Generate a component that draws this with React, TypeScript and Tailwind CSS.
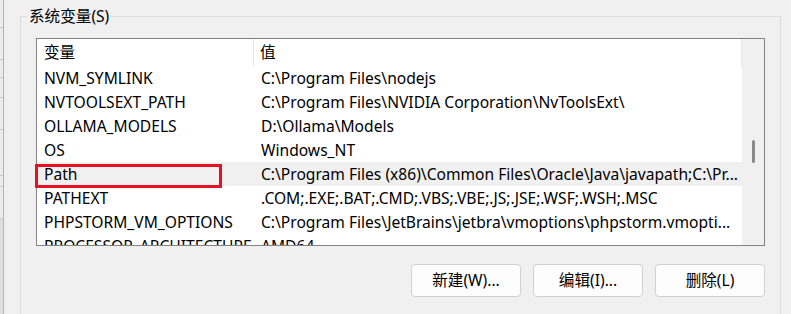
import React from 'react'

const rows = [
  { name: 'NVM_SYMLINK', value: 'C:\\Program Files\\nodejs' },
  { name: 'NVTOOLSEXT_PATH', value: 'C:\\Program Files\\NVIDIA Corporation\\NvToolsExt\\' },
  { name: 'OLLAMA_MODELS', value: 'D:\\Ollama\\Models' },
  { name: 'OS', value: 'Windows_NT' },
  { name: 'Path', value: 'C:\\Program Files (x86)\\Common Files\\Oracle\\Java\\javapath;C:\\Pr...', selected: true },
  { name: 'PATHEXT', value: '.COM;.EXE;.BAT;.CMD;.VBS;.VBE;.JS;.JSE;.WSF;.WSH;.MSC' },
  { name: 'PHPSTORM_VM_OPTIONS', value: 'C:\\Program Files\\JetBrains\\jetbra\\vmoptions\\phpstorm.vmopti...' },
  { name: 'PROCESSOR_ARCHITECTURE', value: 'AMD64' },
]

const buttons = ['新建(W)...', '编辑(I)...', '删除(L)']

export default function App() {
  return (
    <div
      className="relative flex w-[791px] h-[314px] overflow-hidden bg-[#f0f0f0] text-black text-[15.6px]"
      style={{ fontFamily: '"Noto Sans", "Noto Sans CJK SC", sans-serif' }}
    >
      {/* window behind, peeking in on the left */}
      <div className="flex flex-col w-[4px] border-r border-[#b4b4b4] bg-[#ececec]">
        <div className="h-[28px] border-b border-[#c8c8c8]"></div>
        <div className="h-[32px] border-b border-[#c8c8c8]"></div>
        <div className="h-[18px] border-b border-[#c8c8c8]"></div>
        <div className="h-[20px] border-b border-[#c8c8c8]"></div>
        <div className="h-[32px] border-b border-[#c8c8c8]"></div>
        <div className="h-[46px] border-b border-[#c8c8c8]"></div>
        <div className="h-[11px] border-b border-[#c8c8c8]"></div>
        <div className="h-[32px] border-b border-[#c8c8c8]"></div>
        <div className="flex-1 bg-[#dedede]"></div>
      </div>

      <div className="pl-[16px] pt-[6px]">
        <fieldset className="w-[761px] h-[330px] border border-[#dcdcdc]">
          <legend className="ml-[6px] px-[2px] leading-[20px]">系统变量(S)</legend>

          <div className="ml-[15px] mt-[12px] w-[729px] h-[208px] border border-[#838383] bg-white flex overflow-hidden">
            <div className="w-[705px] flex flex-col">
              <div className="flex h-[27px] shrink-0 items-center">
                <div className="w-[217px] pl-[7px] pt-[1px] h-full flex items-center border-r border-[#e5e5e5]">变量</div>
                <div className="flex-1 pl-[6px] pt-[1px] h-full flex items-center border-r border-[#e5e5e5]">值</div>
              </div>
              {rows.map((row) => (
                <div
                  key={row.name}
                  className={`flex h-[24px] shrink-0 items-center pt-[1px] whitespace-nowrap ${row.selected ? 'bg-[#f0f0f0]' : ''}`}
                >
                  <div className="w-[218px] pl-[7px] overflow-hidden">{row.name}</div>
                  <div className="flex-1 pl-[6px] overflow-hidden">{row.value}</div>
                </div>
              ))}
            </div>
            <div className="flex-1 bg-[#f0f0f0] flex justify-center">
              <div className="mt-[101px] w-[3px] h-[23px] rounded-full bg-[#8a8a8a]"></div>
            </div>
          </div>

          <div className="ml-[15px] mt-[18px] w-[729px] flex justify-end gap-[12px]">
            {buttons.map((label) => (
              <button
                key={label}
                className="w-[110px] h-[33px] rounded-[4px] border border-[#d0d0d0] bg-[#fdfdfd] flex items-center justify-center"
              >
                {label}
              </button>
            ))}
          </div>
        </fieldset>
      </div>

      {/* red annotation box round the Path row */}
      <div className="absolute left-[35px] top-[164px] w-[187px] h-[24px] border-[3px] border-[#e81123]"></div>
    </div>
  )
}
